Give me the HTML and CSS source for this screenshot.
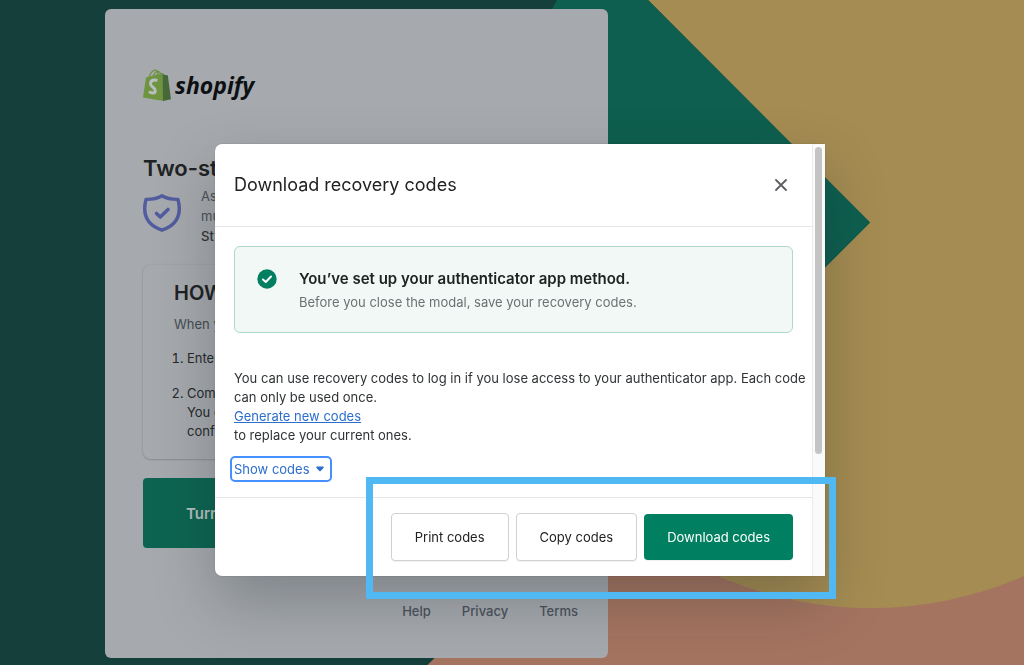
FILE: index.html
```html
<!DOCTYPE html>
<html lang="en">
<head>
<meta charset="utf-8">
<meta name="viewport" content="width=device-width, initial-scale=1">
<title>Download recovery codes</title>
<link rel="stylesheet" href="styles.css">
</head>
<body>
<svg class="backdrop" viewBox="0 0 1024 665" preserveAspectRatio="xMinYMin slice" aria-hidden="true">
  <rect width="1024" height="665" fill="#a57460"/>
  <circle cx="871" cy="226" r="382" fill="#a58c52"/>
  <path d="M0 0H648L870 222.500L427.500 665H0z" fill="#143f3a"/>
  <path d="M557 0H648L870 222.500L700 392.500L500 105z" fill="#0e5f4f"/>
</svg>

<main class="card">
  <div class="brand">
    <svg class="brand-bag" viewBox="0 0 28 32" aria-hidden="true">
      <path d="M6 8.500C7 4 10 1 12.500 1.200C14.500 1.500 15 4 15 7M10 8C10.500 5 13 2.500 15 2.500C17 2.700 17.500 5 17.500 6" fill="none" stroke="#6f9440" stroke-width="1.300"/>
      <path d="M3 8.500L19.500 4L20.500 32L0 28.500z" fill="#6f9440"/>
      <path d="M19.500 4L21.500 6L24.800 6.300L28 30.200L20 32z" fill="#47693a"/>
      <path d="M14.300 11.700C11.500 10 7.700 11.200 7.500 14.600C7.400 18.500 12.500 18.200 12.300 21.800C12.200 24.700 8.700 24.600 6 22.600" fill="none" stroke="#b9bec1" stroke-width="3"/>
    </svg>
    <span class="brand-name">shopify</span>
  </div>

  <h1 class="title">Two-step</h1>
  <div class="intro">
    <svg class="shield" viewBox="0 0 38 38" fill="none" stroke="#525d9f" stroke-linecap="round" stroke-linejoin="round" aria-hidden="true">
      <path d="M19 1.800C14.500 4.500 9 5.500 3 5.400C0 17 1 30 19 36.200C37 30 38 17 35 5.400C29 5.500 23.500 4.500 19 1.800z" stroke-width="3.400"/>
      <path d="M13.500 19.500L17.300 23L25 15.500" stroke-width="3.600"/>
    </svg>
    <p class="intro-text">As<br>mu<br><b>St</b></p>
  </div>

  <section class="how">
    <h2 class="how-title">HOW</h2>
    <p class="how-lead">When y</p>
    <ol class="steps">
      <li>Enter</li>
      <li>Com<br>You c<br>conf</li>
    </ol>
  </section>

  <button class="turn-on" type="button">Turn</button>

  <nav class="links">
    <a href="#help">Help</a>
    <a href="#privacy">Privacy</a>
    <a href="#terms">Terms</a>
  </nav>
</main>

<div class="overlay">
  <div class="modal" role="dialog" aria-modal="true" aria-labelledby="modal-title">
    <div class="modal-main">
      <header class="modal-header">
        <h2 class="modal-title" id="modal-title">Download recovery codes</h2>
        <button class="close" type="button" aria-label="Close">
          <svg viewBox="0 0 12 12" width="12" height="12" aria-hidden="true"><path d="M1 1L11 11M11 1L1 11" stroke="#5c5f62" stroke-width="1.800" stroke-linecap="round"/></svg>
        </button>
      </header>

      <div class="modal-body">
        <div class="banner">
          <svg class="tick" viewBox="0 0 20 20" aria-hidden="true"><circle cx="10" cy="10" r="9.700" fill="#008060"/><path d="M6 10.500L8.800 13L14 7.500" fill="none" stroke="#fff" stroke-width="2" stroke-linecap="round" stroke-linejoin="round"/></svg>
          <div>
            <h3 class="banner-title">You’ve set up your authenticator app method.</h3>
            <p class="banner-text">Before you close the modal, save your recovery codes.</p>
          </div>
        </div>
        <div class="copy">
          <p>You can use recovery codes to log in if you lose access to your authenticator app. Each code can only be used once.</p>
          <a class="generate" href="#generate">Generate new codes</a>
          <p>to replace your current ones.</p>
        </div>
        <button class="show" type="button">Show codes
          <svg viewBox="0 0 8 6" width="8" height="6" aria-hidden="true"><path d="M.5 .5H7.500Q8 1.500 7 2.600L4.600 5Q4 5.500 3.400 5L1 2.600Q0 1.500 .5 .5z" fill="#2c6ecb"/></svg>
        </button>
      </div>

      <footer class="modal-footer">
        <button class="btn" type="button">Print codes</button>
        <button class="btn" type="button">Copy codes</button>
        <button class="btn btn-primary" type="button">Download codes</button>
        <div class="highlight"></div>
      </footer>
    </div>
    <div class="scrollbar"><div class="thumb"></div></div>
  </div>
</div>
</body>
</html>
```
FILE: styles.css
```css
* { box-sizing: border-box; }

body {
  margin: 0;
  min-height: 100vh;
  padding: 9px 24px 7px 105px;
  background: #a57460;
  color: #202223;
  font: 13px/19px Inter, "Liberation Sans", sans-serif;
}

h1, h2, h3, p, ol { margin: 0; padding: 0; }
button { font: inherit; cursor: pointer; }

.backdrop {
  position: fixed;
  inset: 0;
  z-index: -1;
  width: 100%;
  height: 100%;
}

/* Page card */
.card {
  max-width: 503px;
  padding: 60px 30px 37px 38px;
  border-radius: 6px;
  background: #a6a9ad;
}

.brand { display: flex; align-items: center; gap: 4px; height: 32px; }
.brand-bag { width: 28px; height: 32px; }
.brand-name {
  color: #0c1013;
  font: italic 700 23px/32px "Open Sans", "Noto Sans", sans-serif;
}

.title { margin-top: 53px; font-size: 22px; line-height: 28px; font-weight: 600; }
.intro { display: flex; align-items: flex-start; gap: 20px; margin-top: 4px; }
.shield { width: 38px; height: 38px; margin-top: 8px; }
.intro-text { color: #4a5056; line-height: 20px; }
.intro-text b { color: #30363a; font-weight: 500; }

.how {
  margin-top: 19px;
  padding: 14px 31px 18px;
  border-radius: 8px;
  box-shadow: 0 0 3px rgba(23, 24, 24, .08), 0 1px 2px rgba(0, 0, 0, .14);
}
.how-title { font-size: 20px; line-height: 28px; font-weight: 600; }
.how-lead { margin-top: 8px; color: #454c52; }
.steps { margin-top: 15px; padding-left: 13px; color: #25292b; }
.steps li + li { margin-top: 16px; }

.turn-on {
  display: block;
  width: 100%;
  max-width: 200px;
  height: 70px;
  margin-top: 19px;
  padding: 0 43px;
  border: 0;
  border-radius: 4px;
  background: #0d6551;
  color: #b4bfbc;
  font-size: 15px;
  font-weight: 600;
  text-align: left;
}

.links { display: flex; justify-content: flex-end; gap: 31px; margin-top: 54px; }
.links a { color: #4b535c; font-weight: 500; text-decoration: none; }

/* Modal */
.overlay {
  position: absolute;
  inset: 0 0 auto;
  padding: 144px 24px 24px 215px;
}
.modal {
  display: flex;
  max-width: 610px;
  border-radius: 7px 0 0 7px;
  background: #fff;
  box-shadow: 0 26px 60px rgba(20, 30, 40, .26), 0 0 2px rgba(0, 0, 0, .2);
}
.modal-main { flex: 1; min-width: 0; }
.modal-header {
  display: flex;
  align-items: center;
  justify-content: space-between;
  padding: 27px 19px;
  border-bottom: 1px solid #e4e6e8;
}
.modal-title { font-size: 18px; line-height: 28px; font-weight: 400; }
.close {
  display: grid;
  place-items: center;
  width: 24px;
  height: 24px;
  padding: 0;
  border: 0;
  background: none;
}
.modal-body { padding: 19px 19px 15px; }
.banner {
  display: flex;
  gap: 22px;
  padding: 22px 22px 20px;
  border: 1px solid #aed9c9;
  border-radius: 6px;
  background: #f1f8f5;
}
.tick { flex: none; width: 20px; height: 20px; }
.banner-title { font-size: 15px; line-height: 20px; font-weight: 600; }
.banner-text { margin-top: 4px; color: #6d7175; }
.copy { margin: 36px -18px 0 0; color: #303335; }
.generate { color: #2c6ecb; text-decoration: underline; }
.show {
  display: flex;
  align-items: center;
  gap: 6px;
  height: 26px;
  margin: 11px 0 0 -4px;
  padding: 0 6px 0 2px;
  border: 2px solid #458fff;
  border-radius: 5px;
  background: #fff;
  color: #2c6ecb;
}

.modal-footer {
  position: relative;
  display: flex;
  align-items: center;
  justify-content: flex-end;
  gap: 7px;
  padding: 15px 19px;
  border-top: 1px solid #e4e6e8;
}
.btn {
  height: 48px;
  padding: 0 23px;
  border: 1px solid #cfd2d4;
  border-radius: 4px;
  background: #fff;
  color: #202223;
  box-shadow: 0 1px 1px rgba(0, 0, 0, .06);
}
.btn-primary { height: 46px; border: 0; background: #008060; color: #fff; }

/* Frame that calls out the footer actions */
.highlight {
  position: absolute;
  inset: -21px -24px -23px 151px;
  border: 7px solid #50b8f3;
  pointer-events: none;
}

.scrollbar {
  width: 13px;
  padding: 3px 2px 0;
  border-left: 1px solid #ececec;
  background: #fafafa;
}
.thumb { width: 7px; height: 307px; border-radius: 4px; background: #c4c4c4; }
```
